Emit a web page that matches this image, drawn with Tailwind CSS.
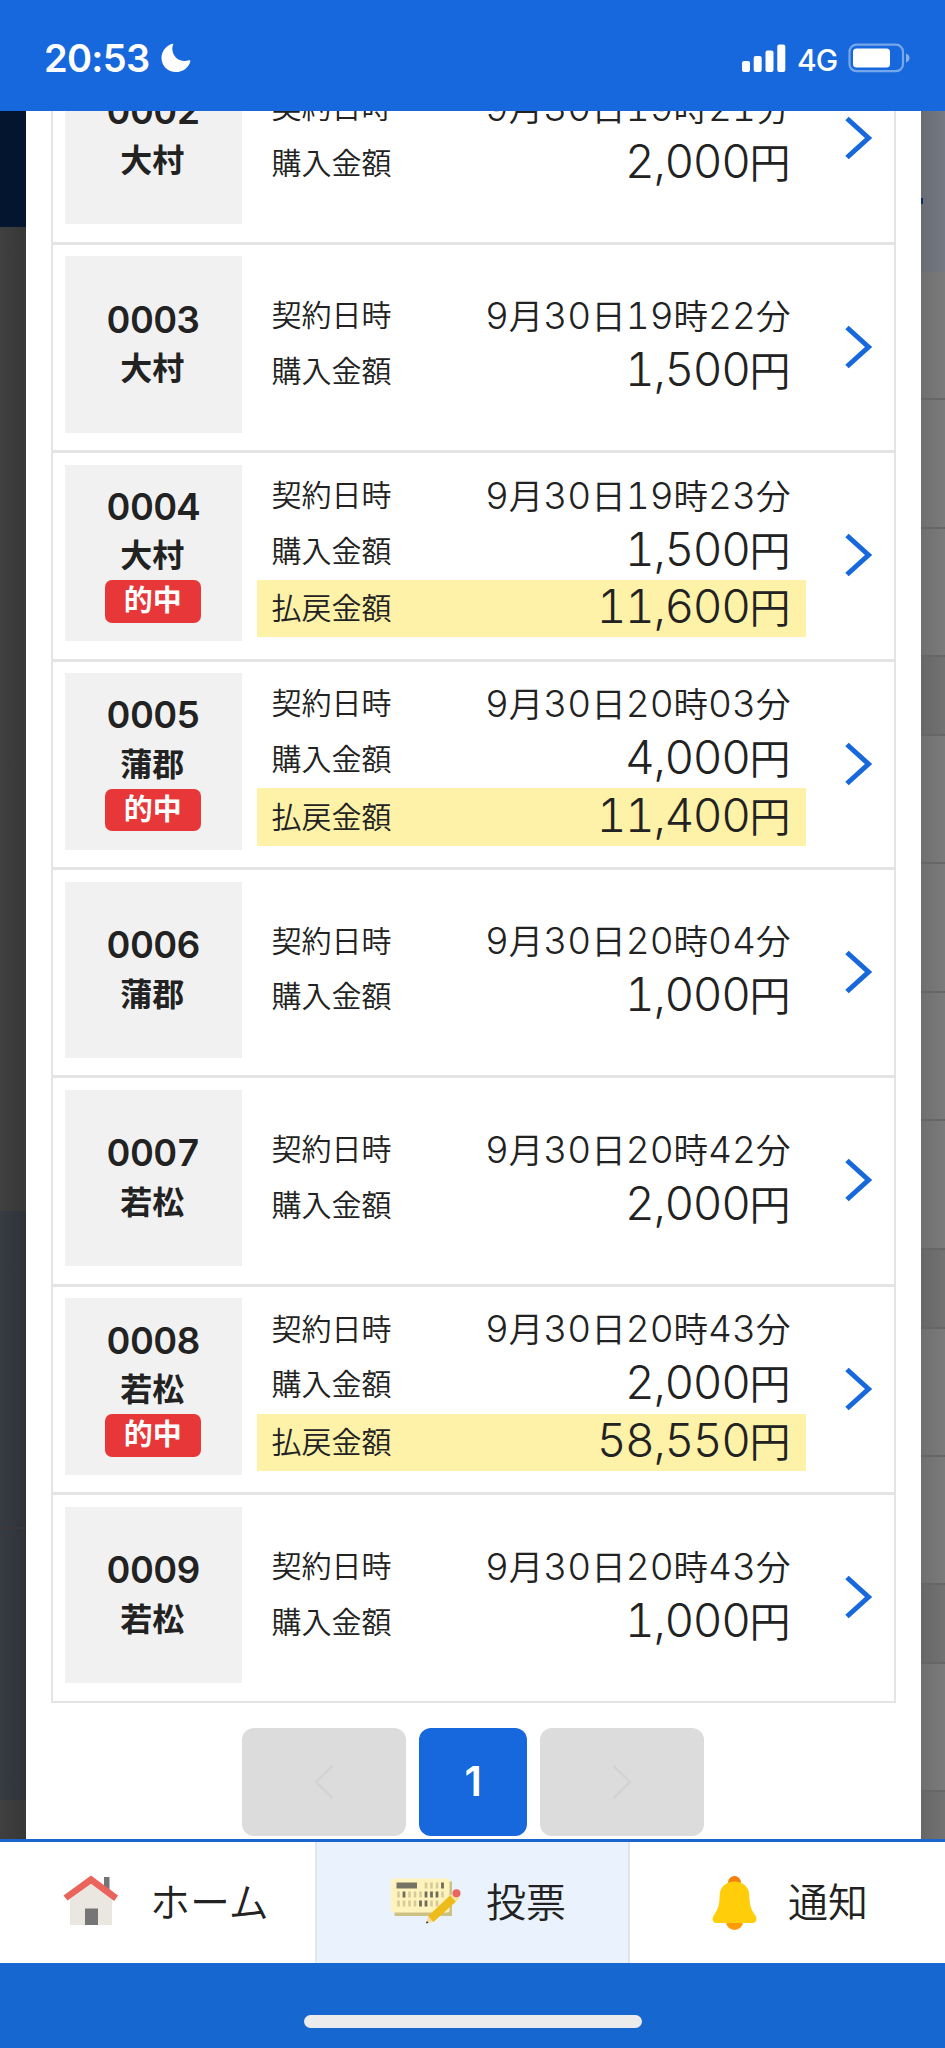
<!DOCTYPE html>
<html lang="ja">
<head>
    <meta charset="UTF-8">
    <meta name="viewport" content="width=device-width, initial-scale=1.0">
    <title>投票照会</title>
    <script src="https://cdn.jsdelivr.net/npm/@tailwindcss/browser@4"></script>
</head>
<body class="w-[945px] h-[2048px] overflow-hidden flex flex-col bg-white text-[#222] font-['Inter','Noto_Sans_CJK_JP',sans-serif]">

    <!-- status bar -->
    <header class="h-[111px] shrink-0 bg-[#1668dc] text-white flex justify-between pl-[44px] pr-[34px] pt-[35px] relative z-10">
        <div class="flex h-[46px] items-center">
            <span class="text-[38px] leading-[46px] font-semibold w-[117px] tracking-[-0.7px] whitespace-nowrap">20:53</span>
            <svg class="w-[30px] h-[30px]" viewBox="0 0 30 30" fill="#fff"><path d="M11.5.7C5.200 2.500.500 8.300.500 14.900.500 22.800 7 29 14.800 29c6.800 0 12.900-4.300 14.500-10.600.300-1-.400-1.500-1.400-1.100-1.300.500-2.800.700-4.200.700C16.600 18 11.300 12.500 11.300 5.500c0-1.300.300-2.500.800-3.700.300-.900.200-1.300-.600-1.100z"/></svg>
        </div>
        <div class="flex h-[46px] items-center">
            <svg class="w-[44px] h-[28px]" viewBox="0 0 44 28" fill="#fff"><rect x="0" y="17" width="8" height="11" rx="2"/><rect x="11.700" y="12" width="8" height="16" rx="2"/><rect x="23.500" y="6.500" width="8" height="21.500" rx="2"/><rect x="35.300" y="0.500" width="8" height="27.500" rx="2"/></svg>
            <span class="text-[30px] leading-[46px] ml-[11px] mt-[3px] w-[41px] font-medium tracking-[-1px]">4G</span>
            <svg class="w-[63px] h-[30px] ml-[10px]" viewBox="0 0 63 30"><rect x="1.500" y="1.700" width="53.500" height="26.500" rx="7" fill="none" stroke="#fff" stroke-opacity=".42" stroke-width="2.200"/><rect x="5" y="5.500" width="37" height="19" rx="3.500" fill="#fff"/><path d="M58 10.500c2.200.800 3.500 2.400 3.500 4.500s-1.300 3.700-3.500 4.500z" fill="#fff" fill-opacity=".48"/></svg>
        </div>
    </header>

    <div class="h-[1728px] shrink-0 flex overflow-hidden">
        <!-- dimmed page, left side -->
        <div class="w-[25.500px] shrink-0 flex flex-col bg-linear-to-r from-[#404040] to-[#373737]">
            <div class="h-[116px] bg-[#03152f]"></div>
            <div class="h-[984px]"></div>
            <div class="h-[318px] bg-linear-to-r from-[#373b43] to-[#303238] border-b-2 border-[#3b3638]"></div>
            <div class="h-[271px] bg-linear-to-r from-[#373b43] to-[#303238]"></div>
        </div>

        <!-- modal -->
        <main class="flex-1 bg-white px-[25.500px] overflow-hidden">
            <div class="-mt-[77.700px] border-x-2 border-b-2 border-[#e4e4e4]">
                <ul id="bet-list"></ul>
            </div>

            <div class="flex justify-center gap-[13px] mt-[25px]">
                <button class="w-[164px] h-[108px] rounded-[12px] bg-[#dcdcdc] flex items-center justify-center">
                    <svg class="w-[20px] h-[34px]" viewBox="0 0 20 34" fill="none" stroke="#d3d3d3" stroke-width="2.500"><path d="M18.500 1 2 17l16.500 16"/></svg>
                </button>
                <button class="w-[108px] h-[108px] rounded-[12px] bg-[#1668dc] text-white text-[41px] font-semibold">1</button>
                <button class="w-[164px] h-[108px] rounded-[12px] bg-[#dcdcdc] flex items-center justify-center">
                    <svg class="w-[20px] h-[34px]" viewBox="0 0 20 34" fill="none" stroke="#d3d3d3" stroke-width="2.500"><path d="M1.500 1 18 17 1.500 33"/></svg>
                </button>
            </div>
        </main>

        <!-- dimmed page, right side -->
        <div class="w-[24px] shrink-0 flex flex-col bg-linear-to-r from-[#6f6f6f] to-[#7b7b7b]">
            <div class="h-[161px] bg-linear-to-r from-[#696c73] to-[#757983] pt-[87px]"><div class="w-[2px] h-[6px] bg-[#0d2c66]"></div></div>
            <div class="h-[128px] border-b-2 border-[#666]"></div>
            <div class="h-[129px] border-b-2 border-[#666]"></div>
            <div class="h-[128px] border-b-2 border-[#666]"></div>
            <div class="h-[79px] border-b-2 border-[#666] bg-linear-to-r from-[#676767] to-[#727272]"></div>
            <div class="h-[128px] border-b-2 border-[#666]"></div>
            <div class="h-[129px] border-b-2 border-[#666]"></div>
            <div class="h-[128px] border-b-2 border-[#666]"></div>
            <div class="h-[129px] border-b-2 border-[#666]"></div>
            <div class="h-[79px] border-b-2 border-[#666] bg-linear-to-r from-[#676767] to-[#727272]"></div>
            <div class="h-[128px] border-b-2 border-[#666]"></div>
            <div class="h-[128px] border-b-2 border-[#666]"></div>
            <div class="h-[79px] border-b-2 border-[#666] bg-linear-to-r from-[#676767] to-[#727272]"></div>
            <div class="h-[128px] border-b-2 border-[#666]"></div>
            <div class="flex-1 bg-linear-to-r from-[#676767] to-[#727272]"></div>
        </div>
    </div>

    <!-- bottom navigation -->
    <nav class="h-[124px] shrink-0 border-t-3 border-[#1b66cd] flex text-[40px] leading-[60px] font-[350] bg-white">
        <a class="w-[317px] flex items-center pl-[62px] border-r-2 border-[#e3e6ea]">
            <svg class="w-[56px] h-[52px] mt-[-4px]" viewBox="0 0 56 52"><path d="M42 2h5.500v16H42z" fill="#757575"/><path d="M8 24 29 8l21 16v26H8z" fill="#eae7e1"/><path d="M23 33.500h13V50H23z" fill="#757575"/><path d="M1.500 20.500 29 .5l27 20-3.800 5.500L29 8.700 5.500 25.500z" fill="#ea645c"/></svg>
            <span class="ml-[32px]">ホーム</span>
        </a>
        <a class="w-[313px] flex items-center pl-[73px] bg-[#eaf2fe] border-r-2 border-[#e0e3e8]">
            <svg class="w-[71px] h-[48px] mt-[-3px]" viewBox="0 0 71 48">
                <path d="M4.500 34v5H62V4.500h-5V34z" fill="#ccc184"/>
                <rect x="1" y="1.500" width="58.500" height="34" rx="2" fill="#fff3bd"/>
                <path d="M6.500 5.500H27v6H6.500z" fill="#757366"/>
                <g stroke="#d4cb98" stroke-width="2.600">
                    <path d="M36 5.500v6m5.500-6v6m5.500-6v6M8.500 14.500v6m11-6v6m5.500-6v6m5.500-6v6m22-6v6M8.500 23.500v6m5.500-6v6m5.500-6v6m5.500-6v6m16.500-6v6m5.500-6v6"/>
                </g>
                <path d="M52.500 5.500v6M14 14.500v6m22-6v6m5.500-6v6m5.500-6v6M30.500 23.500v6m5.500-6v6" stroke="#716d5c" stroke-width="2.800"/>
                <path d="M36 46.500l2.500-8 5.500 6z" fill="#f7dc98"/>
                <path d="M36 46.500l.8-2.500 1.700 1.700z" fill="#222"/>
                <path d="M38.200 39 60 18.500l6 6L43.500 45z" fill="#edbb1a"/>
                <path d="M60 18.500l3.500-3.200 6 6-3.500 3.200z" fill="#fde49b"/>
                <circle cx="66.500" cy="16.300" r="4" fill="#e8665f"/>
            </svg>
            <span class="ml-[25px]">投票</span>
        </a>
        <a class="flex-1 flex items-center pl-[82px]">
            <svg class="w-[45px] h-[56px] mt-[1px]" viewBox="0 0 45 56"><circle cx="22.500" cy="7.500" r="6.500" fill="#f57f0b"/><circle cx="22.500" cy="46.500" r="8.500" fill="#ff9c07"/><path d="M22.500 6.500C14 6.500 8 12 7.700 20c-.2 9-1.200 14-6 20.500C-.8 44 1 48 4.500 48h36c3.500 0 5.300-4 2.800-7.500-4.800-6.500-5.800-11.500-6-20.500C37 12 31 6.500 22.500 6.500z" fill="#ffcd0a"/></svg>
            <span class="ml-[31px]">通知</span>
        </a>
    </nav>

    <footer class="flex-1 bg-[#1667d0] pt-[52px]">
        <div class="w-[338px] h-[13px] rounded-full bg-[#ececec] mx-auto"></div>
    </footer>

    <script>
        const bets = [
            { no: '0002', place: '大村', date: '9月30日19時21分', amount: '2,000' },
            { no: '0003', place: '大村', date: '9月30日19時22分', amount: '1,500' },
            { no: '0004', place: '大村', date: '9月30日19時23分', amount: '1,500', payout: '11,600' },
            { no: '0005', place: '蒲郡', date: '9月30日20時03分', amount: '4,000', payout: '11,400' },
            { no: '0006', place: '蒲郡', date: '9月30日20時04分', amount: '1,000' },
            { no: '0007', place: '若松', date: '9月30日20時42分', amount: '2,000' },
            { no: '0008', place: '若松', date: '9月30日20時43分', amount: '2,000', payout: '58,550' },
            { no: '0009', place: '若松', date: '9月30日20時43分', amount: '1,000' },
        ];

        // kanji are set slightly smaller than the digits
        const formatDate = (s) => s.replace(/[月日時分]/g, '<span class="text-[34.500px]">$&</span>');
        const yen = (s) => `<span class="text-[46px] leading-none tabular-nums tracking-[-1.400px]">${s}<span class="text-[41px] tracking-normal">円</span></span>`;

        document.getElementById('bet-list').innerHTML = bets.map((b) => `
            <li class="h-[208.430px] border-t-3 border-[#e4e4e4] flex pt-[11.500px] pl-[12px]">
                <div class="w-[176.500px] h-[176.500px] shrink-0 bg-[#f1f1f1] flex flex-col items-center justify-center">
                    <p class="h-[48.500px] leading-[48px] text-[37px] font-semibold tabular-nums tracking-[-0.600px]">${b.no}</p>
                    <p class="h-[49px] leading-[49px] text-[32px] font-bold pr-[2px]">${b.place}</p>
                    ${b.payout ? '<p class="w-[96px] h-[42.500px] rounded-[7px] bg-[#e73739] text-white text-[29px] leading-[41px] font-bold text-center pr-[1px]">的中</p>' : ''}
                </div>
                <dl class="w-[549px] h-[176.500px] ml-[15px] shrink-0 flex flex-col justify-center text-[30px] font-[350]">
                    <div class="h-[54px] flex justify-between items-center px-[15px]">
                        <dt>契約日時</dt>
                        <dd class="text-[37px] leading-none tabular-nums whitespace-nowrap">${formatDate(b.date)}</dd>
                    </div>
                    <div class="h-[57.500px] flex justify-between items-center px-[15px]">
                        <dt>購入金額</dt>
                        <dd class="-mt-[5px] leading-none">${yen(b.amount)}</dd>
                    </div>
                    ${b.payout ? `<div class="h-[57.500px] flex justify-between items-center px-[15px] bg-[#fef1a8]">
                        <dt>払戻金額</dt>
                        <dd class="-mt-[5px] leading-none">${yen(b.payout)}</dd>
                    </div>` : ''}
                </dl>
                <svg class="w-[28px] h-[44px] ml-[39.500px] mt-[68.500px]" viewBox="0 0 28 44" fill="none" stroke="#1668dc" stroke-width="5"><path d="M2 2.500 23.500 22 2 41.500"/></svg>
            </li>`).join('');
    </script>
</body>
</html>
